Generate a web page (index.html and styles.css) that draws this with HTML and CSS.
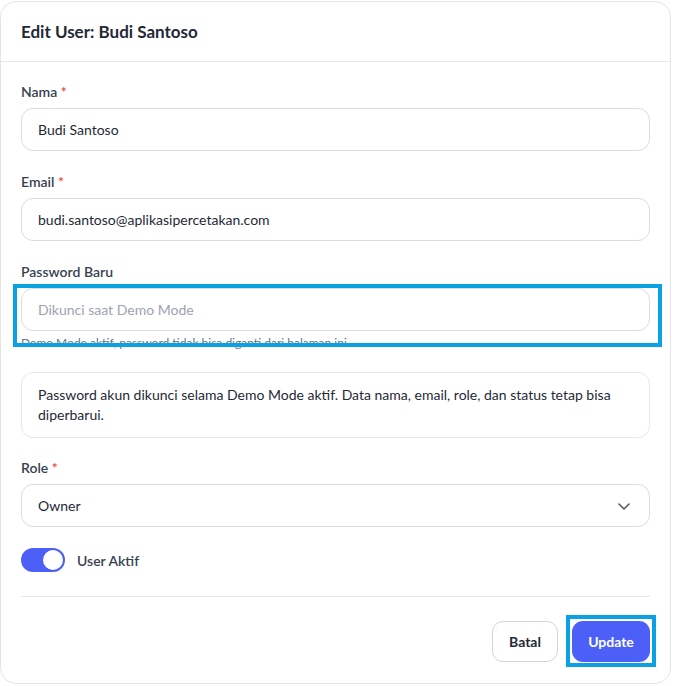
FILE: index.html
```html
<!DOCTYPE html>
<html lang="id">
<head>
<meta charset="utf-8">
<title>Edit User</title>
<link rel="stylesheet" href="styles.css">
</head>
<body>
<div class="card">
  <div class="card-header">
    <h1 class="title">Edit User: Budi Santoso</h1>
  </div>
  <div class="card-body">
    <div class="field">
      <label class="label">Nama <span class="req">*</span></label>
      <div class="input">Budi Santoso</div>
    </div>
    <div class="field">
      <label class="label">Email <span class="req">*</span></label>
      <div class="input">budi.santoso@aplikasipercetakan.com</div>
    </div>
    <div class="field field-pw">
      <label class="label">Password Baru</label>
      <div class="input placeholder">Dikunci saat Demo Mode</div>
      <div class="help">Demo Mode aktif, password tidak bisa diganti dari halaman ini.</div>
      <div class="highlight highlight-pw"></div>
    </div>
    <div class="notice">Password akun dikunci selama Demo Mode aktif. Data nama, email, role, dan status tetap bisa diperbarui.</div>
    <div class="field">
      <label class="label">Role <span class="req">*</span></label>
      <div class="input select">
        <span>Owner</span>
        <svg class="chev" width="14" height="14" viewBox="0 0 14 14"><path d="M2 5 L7 10 L12 5" fill="none" stroke="#4b5563" stroke-width="1.5" stroke-linecap="round" stroke-linejoin="round"/></svg>
      </div>
    </div>
    <div class="toggle-row">
      <span class="toggle"><span class="knob"></span></span>
      <span class="toggle-label">User Aktif</span>
    </div>
    <div class="footer">
      <button class="btn btn-outline">Batal</button>
      <span class="btn-wrap">
        <button class="btn btn-primary">Update</button>
        <span class="highlight highlight-btn"></span>
      </span>
    </div>
  </div>
</div>
</body>
</html>
```
FILE: styles.css
```css
* { box-sizing: border-box; }
html, body { margin: 0; padding: 0; background: #ffffff; }
body {
  font-family: "Lato", "Noto Sans", sans-serif;
  color: #1f2937;
  padding-top: 1px;
}
.card {
  width: 671px;
  height: 683px;
  border: 1px solid #e3e5e8;
  border-radius: 16px;
  background: #fff;
}
.card-header {
  height: 60px;
  border-bottom: 1px solid #e5e7eb;
  display: flex;
  align-items: center;
  padding: 0 20px;
}
.title {
  margin: 0;
  font-size: 17px;
  font-weight: 700;
  color: #1f2937;
}
.card-body {
  padding: 20px 20px 0 20px;
}
.field {
  margin-bottom: 21px;
  position: relative;
}
.label {
  display: block;
  font-size: 14px;
  line-height: 20px;
  font-weight: 600;
  color: #374151;
  margin-bottom: 6px;
}
.req { color: #ef4444; }
.input {
  height: 43px;
  border: 1px solid #d9dce1;
  border-radius: 12px;
  padding: 0 16px;
  display: flex;
  align-items: center;
  font-size: 14px;
  color: #1f2937;
}
.placeholder { color: #9ca3af; }
.select { justify-content: space-between; padding-right: 18px; }
.help {
  font-size: 12px;
  line-height: 16px;
  color: #6b7280;
  margin-top: 4px;
  height: 16px;
}
.field-pw { margin-bottom: 21px; }
.highlight {
  position: absolute;
  border: 4px solid #0aa2e2;
  pointer-events: none;
}
.highlight-pw {
  left: -8px;
  right: -12px;
  top: 22px;
  height: 63px;
}
.notice {
  border: 1px solid #e5e7eb;
  border-radius: 12px;
  padding: 12px 16px;
  font-size: 14px;
  line-height: 20px;
  color: #1f2937;
  margin-bottom: 20px;
}
.toggle-row {
  display: flex;
  align-items: center;
  gap: 12px;
  height: 24px;
}
.toggle {
  width: 44px;
  height: 24px;
  border-radius: 12px;
  background: #4c5ff6;
  position: relative;
  display: inline-block;
}
.knob {
  position: absolute;
  right: 2px;
  top: 2px;
  width: 20px;
  height: 20px;
  border-radius: 50%;
  background: #fff;
}
.toggle-label {
  font-size: 14px;
  font-weight: 600;
  color: #374151;
}
.footer {
  margin-top: 24px;
  border-top: 1px solid #e5e7eb;
  padding-top: 24px;
  display: flex;
  justify-content: flex-end;
  gap: 14px;
}
.btn {
  font-family: inherit;
  font-size: 14px;
  font-weight: 700;
  height: 41px;
  border-radius: 11px;
  padding: 0 16px;
  cursor: pointer;
}
.btn-outline {
  background: #fff;
  border: 1px solid #d1d5db;
  color: #1f2937;
  width: 66px;
}
.btn-primary {
  background: #4c5ff6;
  border: none;
  color: #fff;
  width: 78px;
}
.btn-wrap { position: relative; display: inline-block; height: 41px; }
.highlight-btn {
  left: -6px;
  right: -6px;
  top: -6px;
  bottom: -5px;
}
```
